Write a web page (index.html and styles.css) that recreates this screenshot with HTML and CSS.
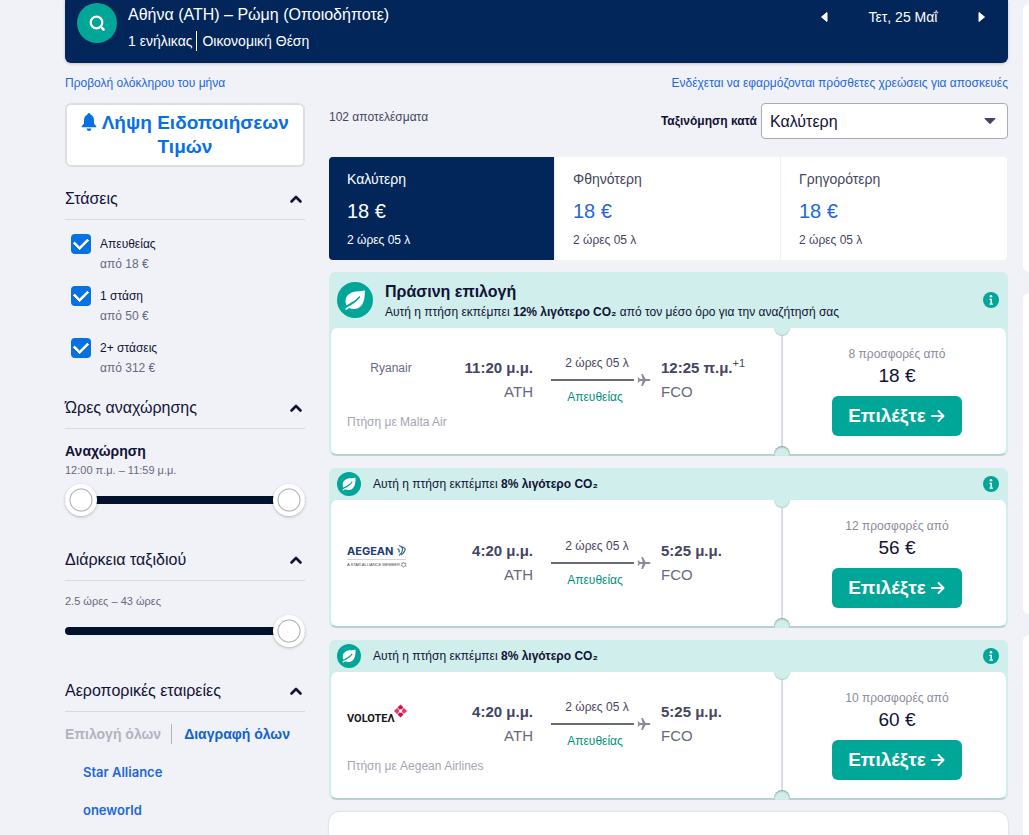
FILE: index.html
```html
<!DOCTYPE html>
<html lang="el">
<head>
<meta charset="utf-8">
<title>Αθήνα – Ρώμη</title>
<link rel="stylesheet" href="styles.css">
</head>
<body>
<svg class="defs" aria-hidden="true">
  <symbol id="leaf" viewBox="0 0 36 36"><circle cx="18" cy="18" r="18" fill="#00a698"/><path d="M27.800 8.200C24 9.600 20 8.800 15.500 10.200 9 12.300 7.300 18 9.500 23.500l1.500-1.100c4-1.800 8-4.200 10.800-7.800.8-.8 1.800.2 1.200 1-3 4-7.500 7-12.300 9.300l-2.500 1.800q0 1.300 1.400 1l2.500-1.800q2.400 1.300 5.600 1.100C25.500 26.500 28.300 18.500 27.800 8.200Z" fill="#fff"/></symbol>
  <symbol id="info" viewBox="0 0 16 16"><circle cx="8" cy="8" r="8" fill="#00a698"/><circle cx="8" cy="4.300" r="1.300" fill="#fff"/><path d="M6.300 6.800H9v4.700h1v1.200H6.500v-1.200h.9V8H6.300Z" fill="#fff"/></symbol>
  <symbol id="up" viewBox="0 0 14 10"><path d="M2.500 7.500 7 3l4.500 4.500" fill="none" stroke="#111236" stroke-width="2.600" stroke-linecap="round" stroke-linejoin="round"/></symbol>
  <symbol id="plane" viewBox="0 0 14 14"><path d="M13.500 7q0 .9-1.300.9H8.600L5.800 13H4.300l1.400-5.100H2.900L1.800 9.500H.6L1.300 7 .6 4.500h1.200l1.100 1.600h2.800L4.300 1h1.500l2.800 5.100h3.600q1.300 0 1.300.9Z" fill="#8a8a98"/></symbol>
  <symbol id="arrow" viewBox="0 0 16 16"><path d="M2 8h11M8.500 3l5 5-5 5" fill="none" stroke="#fff" stroke-width="2" stroke-linecap="round" stroke-linejoin="round"/></symbol>
</svg>
<div class="page">
  <div class="content">
    <header class="summary">
      <button class="search" aria-label="Αναζήτηση"><svg viewBox="0 0 20 20"><circle cx="9.500" cy="9.500" r="5.800" fill="none" stroke="#fff" stroke-width="2.200"/><path d="m15.200 15.200 1.300 1.300" stroke="#fff" stroke-width="2.600" stroke-linecap="round"/></svg></button>
      <div class="trip">
        <h1>Αθήνα (ATH) – Ρώμη (Οποιοδήποτε)</h1>
        <p><span>1 ενήλικας</span><span>Οικονομική Θέση</span></p>
      </div>
      <div class="dates">
        <button aria-label="Προηγούμενη ημέρα"><svg viewBox="0 0 8 12"><path d="M7 1.500v9L1.500 6Z" fill="#fff" stroke="#fff" stroke-linejoin="round"/></svg></button>
        <span>Τετ, 25 Μαΐ</span>
        <button aria-label="Επόμενη ημέρα"><svg viewBox="0 0 8 12"><path d="M1 1.500v9L6.500 6Z" fill="#fff" stroke="#fff" stroke-linejoin="round"/></svg></button>
      </div>
    </header>
    <nav class="links"><a href="#">Προβολή ολόκληρου του μήνα</a><a href="#">Ενδέχεται να εφαρμόζονται πρόσθετες χρεώσεις για αποσκευές</a></nav>
    <div class="columns">
      <aside class="filters">
        <button class="alert"><svg viewBox="0 0 16 18"><path d="M8 0q1.500 0 1.500 1.500Q13 3 13 7v3.500l2.300 2.800v1H.7v-1L3 10.500V7q0-4 3.500-5.500Q6.500 0 8 0ZM5.500 15.500h5Q10 18 8 18t-2.500-2.500Z" fill="#0770e3"/></svg> Λήψη Ειδοποιήσεων Τιμών</button>
        <section>
          <h2><button>Στάσεις<svg><use href="#up"/></svg></button></h2>
          <div class="body">
            <label class="check"><input type="checkbox" checked><span>Απευθείας<small>από 18 €</small></span></label>
            <label class="check"><input type="checkbox" checked><span>1 στάση<small>από 50 €</small></span></label>
            <label class="check"><input type="checkbox" checked><span>2+ στάσεις<small>από 312 €</small></span></label>
          </div>
        </section>
        <section>
          <h2><button>Ώρες αναχώρησης<svg><use href="#up"/></svg></button></h2>
          <div class="body">
            <h3>Αναχώρηση</h3>
            <p class="range">12:00 π.μ. – 11:59 μ.μ.</p>
            <div class="slider"><input type="range" aria-label="Αναχώρηση από" value="0"><input class="over" type="range" aria-label="Αναχώρηση έως" value="100"></div>
          </div>
        </section>
        <section>
          <h2><button>Διάρκεια ταξιδιού<svg><use href="#up"/></svg></button></h2>
          <div class="body tight">
            <p class="range">2.5 ώρες – 43 ώρες</p>
            <div class="slider"><input type="range" aria-label="Διάρκεια ταξιδιού" value="100"></div>
          </div>
        </section>
        <section>
          <h2><button>Αεροπορικές εταιρείες<svg><use href="#up"/></svg></button></h2>
          <div class="choose"><button disabled>Επιλογή όλων</button><button>Διαγραφή όλων</button></div>
          <div class="alliances"><button>Star Alliance</button><button>oneworld</button></div>
        </section>
      </aside>
      <main>
        <div class="toolbar">
          <span class="count">102 αποτελέσματα</span>
          <label for="sort">Ταξινόμηση κατά</label>
          <div class="select"><select id="sort"><option>Καλύτερη</option><option>Φθηνότερη</option><option>Γρηγορότερη</option></select><svg viewBox="0 0 10 6"><path d="M1 1h8L5 5Z" fill="#444560" stroke="#444560" stroke-linejoin="round"/></svg></div>
        </div>
        <div class="tabs">
          <button class="active"><span>Καλύτερη</span><strong>18 €</strong><small>2 ώρες 05 λ</small></button>
          <button><span>Φθηνότερη</span><strong>18 €</strong><small>2 ώρες 05 λ</small></button>
          <button><span>Γρηγορότερη</span><strong>18 €</strong><small>2 ώρες 05 λ</small></button>
        </div>
        <article class="ticket">
          <div class="eco big"><svg class="leaf"><use href="#leaf"/></svg><div><h3>Πράσινη επιλογή</h3><p>Αυτή η πτήση εκπέμπει <b>12% λιγότερο CO₂</b> από τον μέσο όρο για την αναζήτησή σας</p></div><button aria-label="Πληροφορίες"><svg><use href="#info"/></svg></button></div>
          <div class="card">
            <div class="flight">
              <div class="leg">
                <div class="logo"><span>Ryanair</span></div>
                <div class="time from"><b>11:20 μ.μ.</b><span>ATH</span></div>
                <div class="path"><span>2 ώρες 05 λ</span><i><svg><use href="#plane"/></svg></i><em>Απευθείας</em></div>
                <div class="time"><b>12:25 π.μ.<sup>+1</sup></b><span>FCO</span></div>
              </div>
              <p class="operator">Πτήση με Malta Air</p>
            </div>
            <div class="offer"><span>8 προσφορές από</span><strong>18 €</strong><button>Επιλέξτε<svg><use href="#arrow"/></svg></button></div>
          </div>
        </article>
        <article class="ticket">
          <div class="eco"><svg class="leaf"><use href="#leaf"/></svg><p>Αυτή η πτήση εκπέμπει <b>8% λιγότερο CO₂</b></p><button aria-label="Πληροφορίες"><svg><use href="#info"/></svg></button></div>
          <div class="card">
            <div class="flight">
              <div class="leg">
                <div class="logo"><svg viewBox="0 0 60 30" role="img" aria-label="Aegean"><text x="0" y="14" font-size="11" font-weight="700" fill="#1b3a78" font-family="Inter, sans-serif">AEGEAN</text><path d="M52 4.500q4 1.500 3.500 4.500T52 14.500M54.500 5.500q4.500 1.500 3.500 4T54 14M50.500 7.500q2.500 1.500 1.500 4" fill="none" stroke="#3f609a" stroke-width="1.200"/><path d="M0 18.500h59" stroke="#d4d6dc"/><text x="0" y="25" font-size="4" fill="#444a58" font-family="Liberation Sans, sans-serif">A STAR ALLIANCE MEMBER</text><path d="m56.500 21 .7 1.500 1.800-.3-.8 1.600 1 1.400-1.700-.1-1 1.300-.8-1.500-1.800-.2 1.200-1.200-.4-1.500 1.300.4Z" fill="none" stroke="#777" stroke-width=".7"/></svg></div>
                <div class="time from"><b>4:20 μ.μ.</b><span>ATH</span></div>
                <div class="path"><span>2 ώρες 05 λ</span><i><svg><use href="#plane"/></svg></i><em>Απευθείας</em></div>
                <div class="time"><b>5:25 μ.μ.</b><span>FCO</span></div>
              </div>
            </div>
            <div class="offer"><span>12 προσφορές από</span><strong>56 €</strong><button>Επιλέξτε<svg><use href="#arrow"/></svg></button></div>
          </div>
        </article>
        <article class="ticket">
          <div class="eco"><svg class="leaf"><use href="#leaf"/></svg><p>Αυτή η πτήση εκπέμπει <b>8% λιγότερο CO₂</b></p><button aria-label="Πληροφορίες"><svg><use href="#info"/></svg></button></div>
          <div class="card">
            <div class="flight">
              <div class="leg">
                <div class="logo"><svg viewBox="0 0 60 30" role="img" aria-label="Volotea"><text x="0" y="20" font-size="11" font-weight="700" fill="#17151a" font-family="Roboto, sans-serif">VOLOTEΛ</text><g fill="#d4104c"><path d="m53.500 2.500 3 3-3 3-3-3Z"/><path d="m53.500 9.500 3 3-3 3-3-3Z"/><path d="m50 6 3 3-3 3-3-3Z" fill="#e23563"/><path d="m57 6 3 3-3 3-3-3Z" fill="#e23563"/></g><path d="m53.500 7 2 2-2 2-2-2Z" fill="#fff"/></svg></div>
                <div class="time from"><b>4:20 μ.μ.</b><span>ATH</span></div>
                <div class="path"><span>2 ώρες 05 λ</span><i><svg><use href="#plane"/></svg></i><em>Απευθείας</em></div>
                <div class="time"><b>5:25 μ.μ.</b><span>FCO</span></div>
              </div>
              <p class="operator">Πτήση με Aegean Airlines</p>
            </div>
            <div class="offer"><span>10 προσφορές από</span><strong>60 €</strong><button>Επιλέξτε<svg><use href="#arrow"/></svg></button></div>
          </div>
        </article>
        <article class="upcoming"></article>
      </main>
    </div>
  </div>
  <aside class="promos"><div></div><div></div><div></div></aside>
</div>
</body>
</html>
```
FILE: styles.css
```css
* { box-sizing: border-box; }
html { overflow: hidden; }
body { margin: 0; background: #f1f2f8; color: #111236; font: 12px/20px "Liberation Sans", Arial, sans-serif; }
h1, h2, h3, p { margin: 0; font-weight: 400; }
button { margin: 0; padding: 0; border: 0; background: none; font: inherit; color: inherit; cursor: pointer; }
a { color: #2267d8; text-decoration: none; }
svg { display: block; flex: none; }
.defs { position: absolute; width: 0; height: 0; }
.page { display: flex; gap: 15px; height: 100vh; overflow: hidden; padding-left: 65px; }
.content { flex: 1; min-width: 0; }
.summary { display: flex; align-items: flex-start; height: 63px; padding: 3px 16px 0 12px; background: #02265a; color: #fff; border-radius: 0 0 6px 6px; box-shadow: 0 1px 3px #0003; }
.search { display: grid; place-items: center; width: 40px; height: 40px; border-radius: 50%; background: #00a698; }
.search svg { width: 20px; height: 20px; }
.trip { flex: 1; padding-left: 11px; }
.trip h1 { font-size: 16px; line-height: 24px; }
.trip p { display: flex; font-size: 14px; padding-top: 4px; }
.trip p span + span { border-left: 1px solid #fff; margin-left: 4px; padding-left: 5px; }
.dates { display: flex; align-items: center; justify-content: space-between; width: 178px; padding-top: 4px; font-size: 14px; }
.dates button { width: 20px; display: grid; place-items: center; }
.dates svg { width: 8px; height: 12px; }
.links { display: flex; justify-content: space-between; padding: 10px 0; }
.columns { display: grid; grid-template-columns: 240px minmax(0, 1fr); gap: 24px; }
.alert { width: 100%; padding: 6px; margin-bottom: 12px; border: 2px solid #dddde5; border-radius: 6px; background: #fff; color: #0770e3; font-size: 19px; font-weight: 700; line-height: 24px; }
.alert svg { display: inline-block; width: 16px; height: 18px; vertical-align: -2px; }
.filters h2 { border-bottom: 1px solid #d5d9ea; }
.filters h2 button { display: flex; align-items: center; justify-content: space-between; width: 100%; height: 40px; font-size: 16px; padding-right: 2px; }
.filters h2 svg { width: 14px; height: 10px; }
.body { padding-top: 12px; }
.body.tight { padding-top: 11px; }
.check { display: flex; gap: 9px; height: 52px; padding: 2px 0 0 6px; }
.check input { appearance: none; flex: none; width: 20px; height: 20px; margin: 0; border-radius: 4px; background: #0770e3; display: grid; place-items: center; }
.check input:checked::after { content: ""; width: 11px; height: 7px; margin-bottom: 4px; border: solid #fff; border-width: 0 0 3px 3px; border-radius: 1px; transform: rotate(-45deg); }
.check small { display: block; font-size: 12px; color: #68697f; }
.filters h3 { font-size: 14px; font-weight: 700; }
.range { font-size: 11px; line-height: 18px; color: #68697f; }
.slider { position: relative; height: 32px; margin: 5px 0 24px; }
.slider input { appearance: none; display: block; width: 100%; height: 32px; margin: 0; background: none; }
.slider input::-webkit-slider-runnable-track { height: 8px; border-radius: 4px; background: #02122c; }
.slider input::-webkit-slider-thumb { appearance: none; width: 32px; height: 32px; margin-top: -12px; border-radius: 50%; background: radial-gradient(circle, #fff 10px, #a9a9b4 11px, #fff 12px); box-shadow: 0 1px 3px #0004; }
.slider .over { position: absolute; inset: 0; pointer-events: none; }
.slider .over::-webkit-slider-runnable-track { background: none; }
.slider .over::-webkit-slider-thumb { pointer-events: auto; }
.choose { display: flex; padding: 12px 0 9px; font-size: 14px; font-weight: 700; color: #0f62cf; }
.choose button:disabled { color: #b2b2bf; }
.choose button + button { border-left: 1px solid #b2b2bf; margin-left: 10px; padding-left: 12px; }
.alliances { display: flex; flex-direction: column; align-items: flex-start; padding-left: 18px; font: 600 13px/38px Inter, sans-serif; color: #2267d8; }
.toolbar { display: flex; align-items: center; height: 36px; margin-bottom: 18px; }
.count { flex: 1; padding-bottom: 8px; color: #444560; }
.toolbar label { font-weight: 700; margin-right: 4px; }
.select { position: relative; width: 247px; }
.select select { appearance: none; width: 100%; height: 36px; padding: 0 8px; border: 1px solid #a9a9b8; border-radius: 4px; background: #fff; color: #111236; font: 16px "Liberation Sans", Arial, sans-serif; }
.select svg { position: absolute; right: 12px; top: 14px; width: 12px; height: 8px; pointer-events: none; }
.tabs { display: grid; grid-template-columns: repeat(3, 1fr); margin: 0 1px 12px 0; border-radius: 4px; overflow: hidden; background: #fff; }
.tabs button { display: flex; flex-direction: column; padding: 12px 18px 10px; text-align: left; color: #444560; border-right: 1px solid #eeeef4; }
.tabs button:last-child { border-right: 0; }
.tabs span { font-size: 14px; }
.tabs strong { padding: 11px 0 8px; font-size: 20px; line-height: 22px; font-weight: 400; color: #2267d8; }
.tabs small { font-size: 12px; }
.tabs .active, .tabs .active strong { background: #02265a; color: #fff; }
.ticket { margin-bottom: 12px; border-radius: 6px; background: #d0eeeb; }
.eco { display: flex; align-items: center; gap: 12px; height: 32px; padding: 0 9px 0 8px; }
.eco p { flex: 1; }
.eco .leaf { width: 24px; height: 24px; }
.eco button svg { width: 16px; height: 16px; }
.eco.big { height: 56px; }
.eco.big > div { flex: 1; padding-top: 4px; }
.eco.big h3 { font-size: 16px; font-weight: 700; }
.eco.big .leaf { width: 36px; height: 36px; }
.card { display: flex; min-height: 128px; border: solid #d0eeeb; border-width: 0 2px 2px; border-bottom-color: #b5d3d0; border-radius: 8px; background: #fff; }
.flight { flex: 1; display: flex; flex-direction: column; justify-content: center; padding-left: 16px; }
.leg { display: grid; grid-template-columns: 88px 116fr 100px 130fr; height: 60px; }
.logo { padding-top: 8px; text-align: center; color: #68697f; }
.logo svg { width: 60px; height: 30px; }
.time { display: flex; flex-direction: column; padding: 6px 0 0 10px; font-size: 15px; line-height: 24px; color: #68697f; }
.time.from { text-align: right; padding: 6px 18px 0 0; }
.time b { color: #444560; }
.time sup { font-size: 11px; line-height: 0; font-weight: 400; }
.path { display: flex; flex-direction: column; padding-top: 3px; text-align: center; color: #444560; }
.path span { padding-right: 8px; }
.path i { display: flex; align-items: center; gap: 3px; height: 14px; }
.path i::before { content: ""; flex: 1; height: 2px; background: #68697f; }
.path i svg { width: 14px; height: 14px; }
.path em { padding-right: 12px; font-style: normal; color: #00917e; }
.operator { height: 22px; line-height: 24px; color: #a4a5b3; }
.offer { position: relative; display: flex; flex-direction: column; align-items: center; justify-content: center; flex: 0 0 225px; border-left: 2px solid #d9dae2; padding-left: 5px; }
.offer::before, .offer::after { content: ""; position: absolute; left: -9px; width: 16px; height: 8px; background: #d0eeeb; }
.offer::before { top: 0; border-radius: 0 0 8px 8px; box-shadow: inset 0 -1px 1px #0002; }
.offer::after { bottom: -2px; height: 10px; border-radius: 8px 8px 0 0; box-shadow: inset 0 1px 2px #0005; }
.offer span { line-height: 16px; color: #8a8b9c; }
.offer strong { margin-bottom: 6px; font-size: 19px; line-height: 28px; font-weight: 400; }
.offer button { display: flex; align-items: center; gap: 4px; height: 40px; padding: 0 16px; border-radius: 6px; background: #00a698; color: #fff; font-size: 19px; font-weight: 700; }
.offer button svg { width: 16px; height: 16px; }
.upcoming { height: 128px; border-radius: 10px; background: #fff; box-shadow: 0 0 2px #0003; }
.promos { display: flex; flex-direction: column; gap: 21px; flex: 0 0 6px; padding-top: 4px; }
.promos div { flex: 0 0 321px; border-radius: 8px 0 0 8px; background: #fff; }
.promos div:first-child { flex-basis: 268px; }
```
